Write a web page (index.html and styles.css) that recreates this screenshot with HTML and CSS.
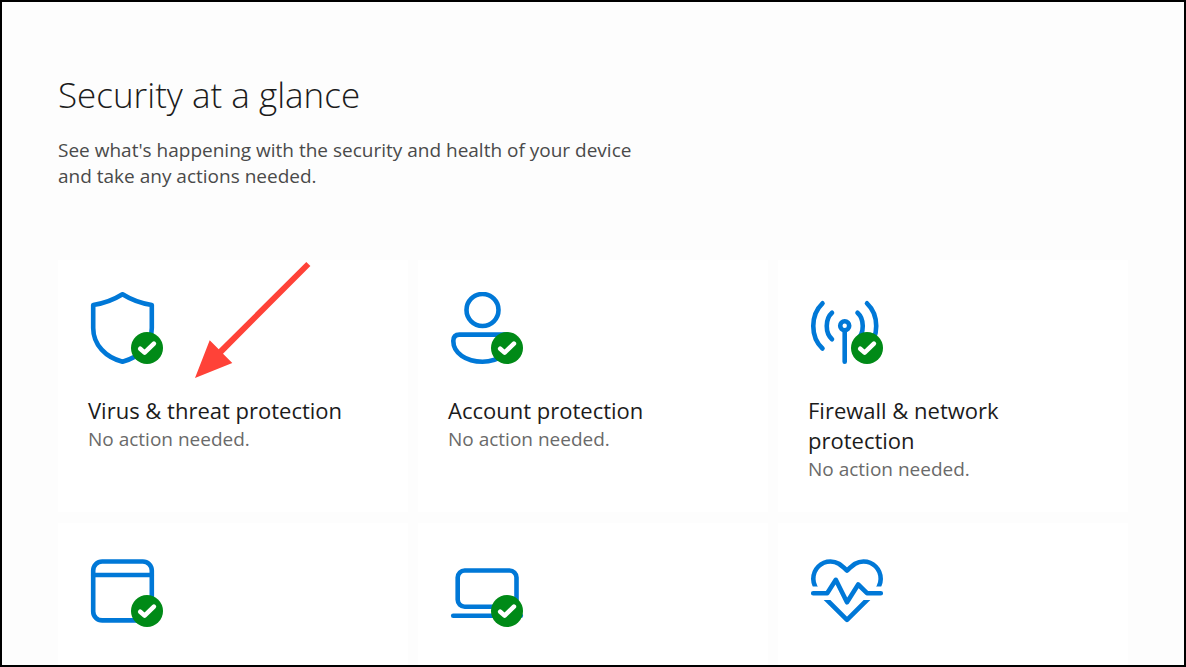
FILE: index.html
```html
<!DOCTYPE html>
<html lang="en">
<head>
<meta charset="utf-8">
<title>Security at a glance</title>
<link rel="stylesheet" href="styles.css">
</head>
<body>
<svg class="defs" width="0" height="0" aria-hidden="true">
  <symbol id="ok" viewBox="0 0 32 32">
    <circle cx="16" cy="16" r="16" fill="#008a17" stroke="none"/>
    <path d="M9.2 16.7 13.6 20.6 22.9 11.7" fill="none" stroke="#fff" stroke-width="4.6" stroke-linecap="round" stroke-linejoin="round"/>
  </symbol>
  <clipPath id="heart-parts">
    <path d="M-3 0H75V31.500H-3ZM-3 45H75V72H-3Z"/>
  </clipPath>
</svg>
<main class="page">
  <header class="intro">
    <h1 class="title">Security at a glance</h1>
    <p class="lead">See what's happening with the security and health of your device and take any actions needed.</p>
  </header>
  <section class="grid">
    <a class="card" href="#virus">
      <svg class="icon" viewBox="-3 0 78 72" aria-hidden="true">
        <path d="M31.5 2.3C40 7.6 50 11.5 60.8 13V36C60.800 53 48 65.500 31.500 69.700C15 65.500 2.200 53 2.200 36V13C13 11.500 23 7.600 31.500 2.300Z"/>
        <use href="#ok" x="40" y="40" width="32" height="32"/>
      </svg>
      <h2 class="name">Virus &amp; threat protection</h2>
      <p class="status">No action needed.</p>
      <svg class="arrow" viewBox="130 0 130 125" aria-hidden="true">
        <path d="M248.300 2 252.400 6 165 93.700 174.300 103 137 118 151.700 80.300 160.700 89.300Z"/>
      </svg>
    </a>
    <a class="card" href="#account">
      <svg class="icon" viewBox="-3 0 78 72" aria-hidden="true">
        <circle cx="31.500" cy="18" r="16"/>
        <path d="M8.500 42.600H54.500Q60.800 42.600 60.800 49C60.800 60 48 69.700 31.500 69.700C15 69.700 2.300 61 2.300 49Q2.300 42.600 8.500 42.600Z"/>
        <use href="#ok" x="40" y="40" width="32" height="32"/>
      </svg>
      <h2 class="name">Account protection</h2>
      <p class="status">No action needed.</p>
    </a>
    <a class="card" href="#firewall">
      <svg class="icon" viewBox="-3 0 78 72" aria-hidden="true">
        <path d="M11.500 11.300C-.8 23 -.8 45 11.500 56.500M21 20.800C14 27 14 41 21 47.200M46.500 20.800C53.500 27 53.500 41 46.500 47.200M56 11.300C68.300 23 68.300 45 56 56.500M33.700 40V69.700"/>
        <circle cx="33.700" cy="33.700" r="4.500"/>
        <use href="#ok" x="40" y="40" width="32" height="32"/>
      </svg>
      <h2 class="name">Firewall &amp; network protection</h2>
      <p class="status">No action needed.</p>
    </a>
    <a class="card" href="#app">
      <svg class="icon" viewBox="-3 0 78 72" aria-hidden="true">
        <rect x="2.200" y="6.500" width="58.600" height="58.900" rx="9"/>
        <path d="M2.200 20H60.800"/>
        <use href="#ok" x="40" y="40" width="32" height="32"/>
      </svg>
      <h2 class="name">App &amp; browser control</h2>
      <p class="status">No action needed.</p>
    </a>
    <a class="card" href="#device">
      <svg class="icon" viewBox="-3 0 78 72" aria-hidden="true">
        <rect x="6.700" y="15.500" width="58.800" height="36.200" rx="7"/>
        <path d="M2.200 60.800H69.800"/>
        <use href="#ok" x="40" y="40" width="32" height="32"/>
      </svg>
      <h2 class="name">Device security</h2>
      <p class="status">No action needed.</p>
    </a>
    <a class="card" href="#health">
      <svg class="icon" viewBox="-3 0 78 72" aria-hidden="true">
        <path clip-path="url(#heart-parts)" d="M36 64.800 10 39C5 34.500 2.300 30 2.300 24C2.300 14 10 6.500 19.500 6.500C26.500 6.500 30 10 36 15.600C42 10 45.500 6.500 52.500 6.500C62 6.500 69.700 14 69.700 24C69.700 30 67 34.500 62 39Z"/>
        <path d="M2.200 38.200H16.200L24.800 24.800 36 47.300 47.200 29.500 56 38.200H69.800"/>
      </svg>
      <h2 class="name">Device performance &amp; health</h2>
      <p class="status">No action needed.</p>
    </a>
  </section>
</main>
</body>
</html>
```
FILE: styles.css
```css
* { box-sizing: border-box; }
body {
  margin: 0;
  font-family: "Open Sans", "Noto Sans", sans-serif;
  color: #1b1b1b;
}
.defs { position: absolute; }
.page {
  height: 100vh;
  overflow: hidden;
  padding: 68px 56px 0;
  border: 2px solid #000;
  background: #fdfdfd;
}
.title {
  margin: 0;
  font-size: 35px;
  line-height: 50px;
  font-weight: 300;
}
.lead {
  max-width: 600px;
  margin: 17px 0 0;
  font-size: 19px;
  line-height: 26px;
  color: #4a4a4a;
}
.grid {
  display: grid;
  grid-template-columns: repeat(3, 1fr);
  grid-auto-rows: minmax(252px, auto);
  gap: 11px 10px;
  margin-top: 71px;
}
.card {
  position: relative;
  padding: 32px 72px 24px 30px;
  background: #fff;
  color: inherit;
  text-decoration: none;
}
.icon {
  display: block;
  width: 78px;
  height: 72px;
  fill: none;
  stroke: #0078d7;
  stroke-width: 4.600;
  stroke-linecap: round;
  stroke-linejoin: round;
}
.name {
  margin: 31px -24px 0 0;
  font-size: 22px;
  line-height: 30px;
  font-weight: 400;
}
.status {
  margin: 1px 0 0;
  font-size: 19px;
  line-height: 26px;
  color: #6a6a6a;
}
.arrow {
  position: absolute;
  top: 0;
  left: 130px;
  width: 130px;
  height: 125px;
  fill: #ff4238;
}
```
